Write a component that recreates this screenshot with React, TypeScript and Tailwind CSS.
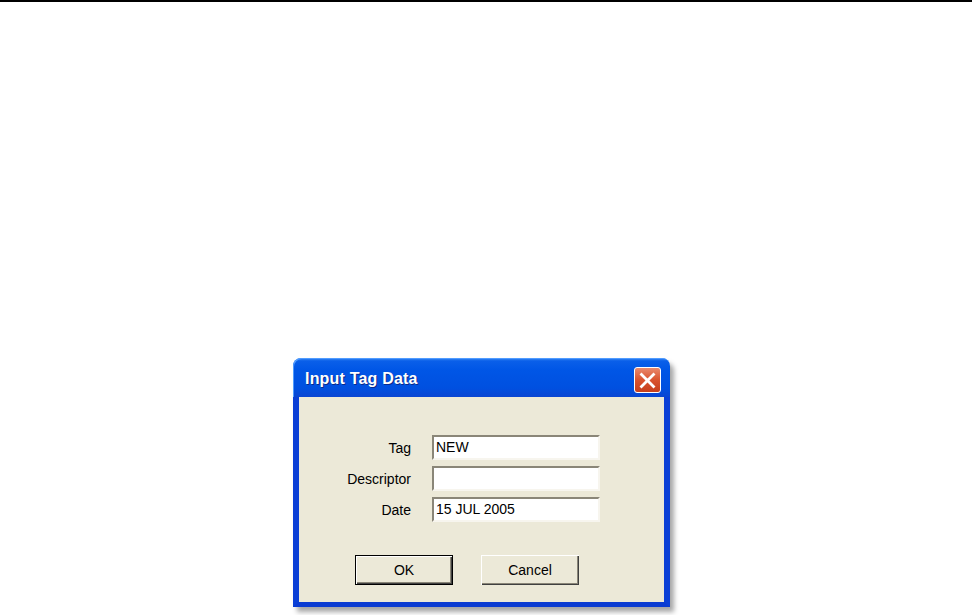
import React from 'react';

function Field({ label, value }: { label: string; value: string }) {
  return (
    <div className="flex items-center">
      <div className="w-[112px] text-right text-[14px] text-black leading-none">{label}</div>
      <div className="ml-[21px] h-[25px] w-[168px] border-t-2 border-l-2 border-t-[#8a8678] border-l-[#8a8678] border-r-2 border-b-2 border-r-[#f7f5ee] border-b-[#f7f5ee] bg-white flex items-center pl-[2px] text-[14px] text-black">
        {value}
      </div>
    </div>
  );
}

function Button({ label, isDefault }: { label: string; isDefault?: boolean }) {
  return (
    <button
      className={
        'h-[30px] w-[98px] bg-[#ece9d8] text-[14px] text-black ' +
        (isDefault
          ? 'border border-black shadow-[inset_1px_1px_0_#ffffff,inset_-1px_-1px_0_#404040,inset_-2px_-2px_0_#8a8678]'
          : 'shadow-[inset_1px_1px_0_#ffffff,inset_-1px_-1px_0_#404040,inset_-2px_-2px_0_#8a8678]')
      }
    >
      {label}
    </button>
  );
}

export default function App() {
  return (
    <div className="min-h-[615px] w-[972px] bg-white font-['Liberation_Sans',Arial,sans-serif] overflow-hidden">
      <div className="h-[2px] w-full bg-black" />
      <div className="ml-[293px] mt-[356px] w-[377px] rounded-t-[8px] shadow-[4px_5px_5px_rgba(0,0,0,0.35)]">
        <div className="h-[39px] rounded-t-[8px] bg-[linear-gradient(to_bottom,#3b8cf5_0px,#0a5fe9_3px,#0056e6_12px,#0050e0_30px,#0a45d2_39px)] flex items-start justify-between pl-[12px] pr-[9px] pt-[9px] shadow-[inset_1px_1px_0_#4f9bff]">
          <span className="mt-[4px] text-[16px] font-bold text-white leading-none tracking-[0.2px] [text-shadow:1px_1px_0_#0b2a8a]">
            Input Tag Data
          </span>
          <div className="h-[26px] w-[27px] rounded-[3px] border border-white bg-[linear-gradient(to_bottom,#e98a6e,#d9532e_50%,#c63f1c)] flex items-center justify-center">
            <svg width="17" height="17" viewBox="0 0 17 17">
              <path d="M2.5 2.5 L14.5 14.5 M14.5 2.5 L2.5 14.5" stroke="white" strokeWidth="2.8" strokeLinecap="square" />
            </svg>
          </div>
        </div>
        <div className="border-x-[6px] border-b-[5px] border-x-[#0a3fd6] border-b-[#0a3bd2] bg-[#ece9d8] h-[210px] pt-[38px]">
          <div className="flex flex-col gap-[6px]">
            <Field label="Tag" value="NEW" />
            <Field label="Descriptor" value="" />
            <Field label="Date" value="15 JUL 2005" />
          </div>
          <div className="mt-[33px] ml-[56px] flex gap-[28px]">
            <Button label="OK" isDefault />
            <Button label="Cancel" />
          </div>
        </div>
      </div>
    </div>
  );
}
